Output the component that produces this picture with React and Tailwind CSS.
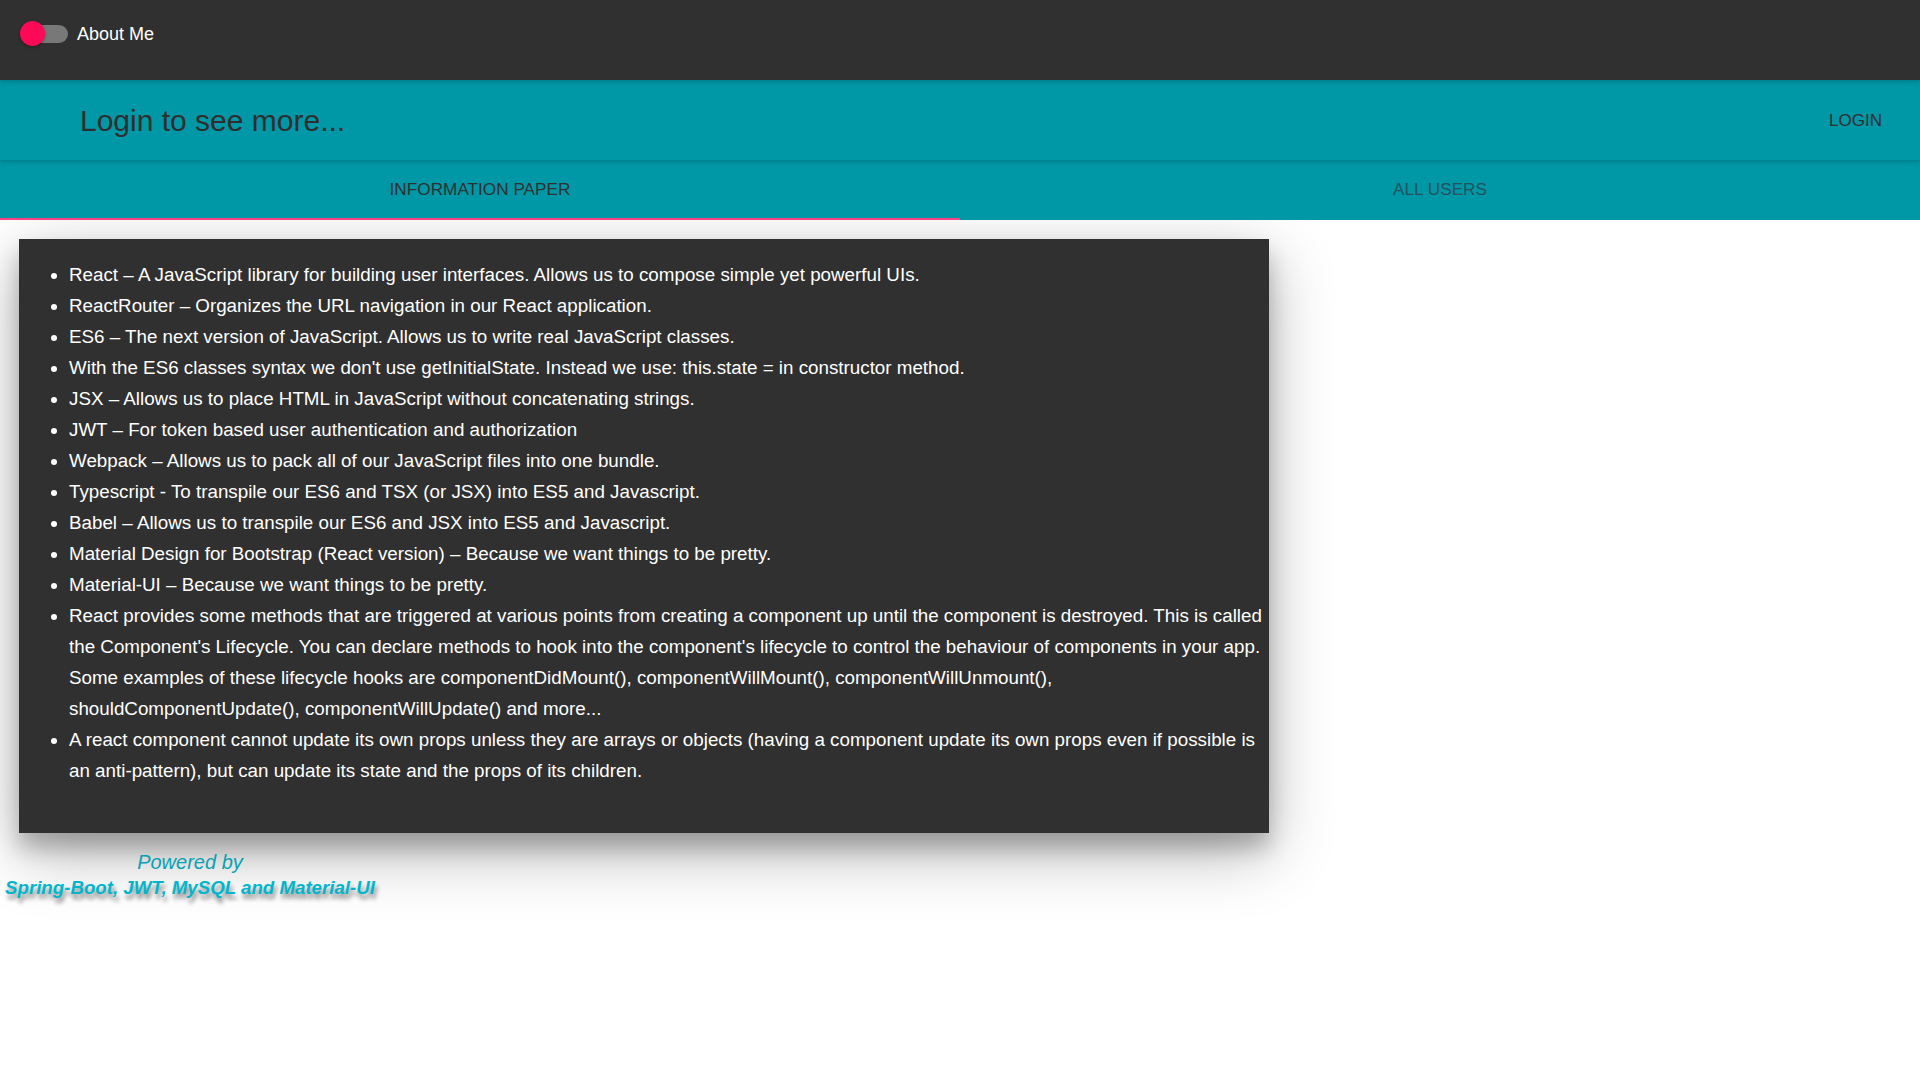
import React, { useState } from "react";

const items = [
  "React – A JavaScript library for building user interfaces. Allows us to compose simple yet powerful UIs.",
  "ReactRouter – Organizes the URL navigation in our React application.",
  "ES6 – The next version of JavaScript. Allows us to write real JavaScript classes.",
  "With the ES6 classes syntax we don't use getInitialState. Instead we use: this.state = in constructor method.",
  "JSX – Allows us to place HTML in JavaScript without concatenating strings.",
  "JWT – For token based user authentication and authorization",
  "Webpack – Allows us to pack all of our JavaScript files into one bundle.",
  "Typescript - To transpile our ES6 and TSX (or JSX) into ES5 and Javascript.",
  "Babel – Allows us to transpile our ES6 and JSX into ES5 and Javascript.",
  "Material Design for Bootstrap (React version) – Because we want things to be pretty.",
  "Material-UI – Because we want things to be pretty.",
  "React provides some methods that are triggered at various points from creating a component up until the component is destroyed. This is called the Component's Lifecycle. You can declare methods to hook into the component's lifecycle to control the behaviour of components in your app. Some examples of these lifecycle hooks are componentDidMount(), componentWillMount(), componentWillUnmount(), shouldComponentUpdate(), componentWillUpdate() and more...",
  "A react component cannot update its own props unless they are arrays or objects (having a component update its own props even if possible is an anti-pattern), but can update its state and the props of its children.",
];

function Toggle() {
  return (
    <div className="relative w-[48px] h-[25px]">
      <div className="absolute left-[13px] top-[4px] w-[35px] h-[18px] rounded-full bg-[#787878]" />
      <div className="absolute left-0 top-0 w-[25px] h-[25px] rounded-full bg-[#fc0a57] shadow-[0_1px_3px_rgba(0,0,0,0.35)]" />
    </div>
  );
}

export default function App() {
  const [tab, setTab] = useState(0);

  return (
    <div className="min-h-screen bg-white font-['Liberation_Sans',Arial,sans-serif]">
      {/* top bar */}
      <div className="relative z-30 h-[80px] bg-[#303030] pt-[21px] pl-[20px] shadow-[0_1px_6px_rgba(0,0,0,0.12),0_1px_4px_rgba(0,0,0,0.12)]">
        <div className="flex items-center gap-[9px]">
          <Toggle />
          <span className="text-[18px] text-white leading-none">About Me</span>
        </div>
      </div>

      {/* login bar */}
      <div className="relative z-20 h-[80px] bg-[#0097a7] flex items-center justify-between pl-[80px] pr-[38px] shadow-[0_1px_6px_rgba(0,0,0,0.12),0_1px_4px_rgba(0,0,0,0.12)]">
        <h1 className="text-[30px] text-[#2e2e2e] font-normal">Login to see more...</h1>
        <button className="text-[17px] text-[#2e2e2e] uppercase pt-[2px]">Login</button>
      </div>

      {/* tabs */}
      <div className="relative z-10 h-[60px] bg-[#0097a7] flex">
        {["Information Paper", "All Users"].map((label, i) => (
          <button
            key={label}
            onClick={() => setTab(i)}
            className={
              "flex-1 h-full flex items-center justify-center text-[17.2px] uppercase " +
              (tab === i ? "text-[#303030]" : "text-[#22535b]")
            }
          >
            {label}
          </button>
        ))}
        <div
          className="absolute bottom-0 h-[2px] w-1/2 bg-[#ff4081]"
          style={{ left: `${tab * 50}%` }}
        />
      </div>

      {/* paper */}
      <div className="ml-[19px] mt-[19px] w-[1250px] bg-[#303030] pt-[20px] pb-[47px] pl-[10px] pr-[2px] shadow-[0_19px_60px_rgba(0,0,0,0.3),0_15px_20px_rgba(0,0,0,0.22)]">
        <ul className="list-disc pl-[40px] text-[18.8px] leading-[31px] text-white">
          {items.map((t, idx) => (
            <li key={idx}>{t}</li>
          ))}
        </ul>
      </div>

      {/* footer */}
      <div className="inline-block text-center ml-[5px] mt-[16px] italic">
        <div className="text-[20px] leading-[26px] text-[#08a0b2]">Powered by</div>
        <div className="text-[18.7px] leading-[26px] font-bold text-[#00b6cc] [text-shadow:2px_5px_4px_rgba(0,0,0,0.45)]">
          Spring-Boot, JWT, MySQL and Material-UI
        </div>
      </div>
    </div>
  );
}
